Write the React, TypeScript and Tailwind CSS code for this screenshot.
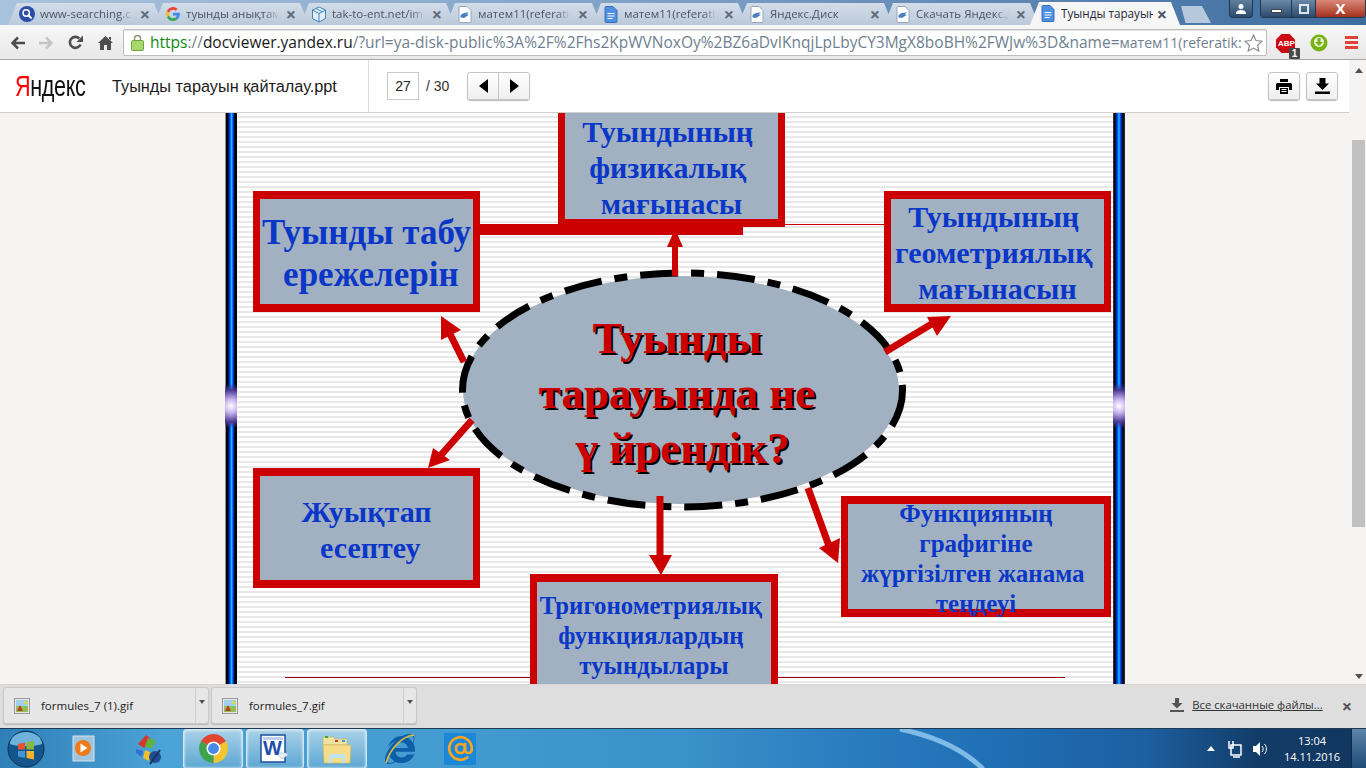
import { AtSign } from "lucide-react";
import { FaInternetExplorer } from "react-icons/fa";

const TABS = [
  { title: "www-searching.c", icon: "search" },
  { title: "туынды анықтам", icon: "google" },
  { title: "tak-to-ent.net/im", icon: "box" },
  { title: "матем11(referatik", icon: "disk" },
  { title: "матем11(referatik", icon: "doc" },
  { title: "Яндекс.Диск", icon: "disk" },
  { title: "Скачать Яндекс.Д", icon: "disk" },
];

const NODES = [
  {
    lines: ["Туынды табу", "\u00a0ережелерін"],
    box: "left-[28px] top-[78px] h-[121px] w-[227px] justify-center pt-[4px]",
    text: "text-[35px] leading-[42px]",
  },
  {
    lines: ["Туындының\u00a0", "физикалық\u00a0", "мағынасы"],
    box: "left-[333px] top-[-8px] h-[122px] w-[227px] pt-[1px]",
    text: "text-[30px] leading-[36px]",
  },
  {
    lines: ["Туындының\u00a0", "геометриялық\u00a0", "мағынасын"],
    box: "left-[659px] top-[78px] h-[121px] w-[227px] pt-0",
    text: "text-[30px] leading-[36px]",
  },
  {
    lines: ["Жуықтап", "\u00a0есептеу"],
    box: "left-[28px] top-[355px] h-[120px] w-[227px] justify-center pt-[3px]",
    text: "text-[30px] leading-[36px]",
  },
  {
    lines: ["Тригонометриялық\u00a0", "функциялардың\u00a0", "туындылары"],
    box: "left-[305px] top-[461px] h-[130px] w-[248px] pt-[9px]",
    text: "text-[24.8px] leading-[30px]",
  },
  {
    lines: ["Функцияның", "графигіне", "жүргізілген жанама\u00a0", "теңдеуі"],
    box: "left-[616px] top-[383px] h-[121px] w-[270px] pt-0",
    text: "first:-mt-[5px] text-[25px] leading-[30px]",
  },
];

function TabIcon({ kind }: { kind: string }) {
  if (kind === "search") {
    return (
      <svg width="16" height="16" viewBox="0 0 16 16" className="shrink-0">
        <circle cx="8" cy="8" r="8" fill="#2b4fa8" />
        <circle cx="7.2" cy="7" r="3.2" fill="none" stroke="#fff" strokeWidth="1.5" />
        <path d="M9.6 9.5l3 3" stroke="#fff" strokeWidth="1.8" />
      </svg>
    );
  }
  if (kind === "google") {
    return (
      <svg width="16" height="16" viewBox="0 0 16 16" className="shrink-0">
        <path d="M14.8 8.2c0-.5 0-1-.1-1.400H8v2.700h3.800a3.300 3.300 0 0 1-1.400 2.100l2.200 1.700c1.400-1.200 2.200-3 2.200-5.100z" fill="#4285f4" />
        <path d="M8 15c1.900 0 3.400-.6 4.600-1.700l-2.200-1.700c-.6.400-1.400.700-2.400.700-1.800 0-3.400-1.200-3.900-2.900L1.800 11.100A7 7 0 0 0 8 15z" fill="#34a853" />
        <path d="M4.100 9.400a4.200 4.200 0 0 1 0-2.800L1.800 4.900a7 7 0 0 0 0 6.200z" fill="#fbbc05" />
        <path d="M8 3.800c1 0 1.900.400 2.600 1l2-2A7 7 0 0 0 1.800 4.900l2.300 1.700C4.600 5 6.200 3.800 8 3.800z" fill="#ea4335" />
      </svg>
    );
  }
  if (kind === "box") {
    return (
      <svg width="16" height="17" viewBox="0 0 16 17" className="shrink-0" fill="#e3eef7" stroke="#3f86bd" strokeWidth="1">
        <path d="M8 1l6.500 3v8.500L8 16l-6.500-3.500V4z" />
        <path d="M1.500 4L8 7.500 14.500 4M8 7.500V16M4.800 2.500l6.500 3.200" fill="none" />
      </svg>
    );
  }
  if (kind === "doc") {
    return (
      <svg width="14" height="17" viewBox="0 0 14 17" className="shrink-0">
        <path d="M1 1.500A1 1 0 0 1 2 .5h7l4 4v11a1 1 0 0 1-1 1H2a1 1 0 0 1-1-1z" fill="#4d8fe0" stroke="#3a70b8" />
        <path d="M3.500 7.500h7M3.500 10h7M3.500 12.500h5" stroke="#fff" strokeWidth="1.200" />
      </svg>
    );
  }
  return (
    <svg width="14" height="17" viewBox="0 0 14 17" className="shrink-0">
      <path d="M1 1.500A1 1 0 0 1 2 .5h7l4 4v11a1 1 0 0 1-1 1H2a1 1 0 0 1-1-1z" fill="#fff" stroke="#9aa5b3" />
      <path d="M2.500 9.500c2-2.800 5-3.300 8.500-3l-2.500 1.800 2.500.4-5 3.300-3.500-.5z" fill="#4a7fc0" />
    </svg>
  );
}

function Tab({ title, icon }: { title: string; icon: string }) {
  return (
    <div className="-mr-[9px] flex h-[22px] w-[155px] shrink-0 items-center bg-gradient-to-b from-[#d3dde9] to-[#bac9da] pl-[11px] pr-[13px] [clip-path:polygon(0_100%,9px_0,146px_0,155px_100%)]">
      <div className="flex w-[16px] shrink-0 justify-center">
        <TabIcon kind={icon} />
      </div>
      <span className="ml-[5px] w-[93px] overflow-hidden whitespace-nowrap text-[11.500px] text-[#4b5563] [mask-image:linear-gradient(90deg,#000_85%,transparent)]">
        {title}
      </span>
      <span className="ml-auto text-[18px] font-bold leading-none text-[#5f6b78]">×</span>
    </div>
  );
}

function TabStrip() {
  return (
    <div className="relative flex h-[25px] shrink-0 items-end overflow-hidden bg-gradient-to-r from-[#a9c3df] via-[#7c9fc5] to-[#3c6c9e] pl-[8px] font-['Open_Sans',sans-serif]">
      {TABS.map((t, i) => (
        <Tab key={i} title={t.title} icon={t.icon} />
      ))}
      <div className="z-10 flex h-[23px] w-[150px] shrink-0 items-center bg-[#f6f6f6] pl-[10px] pr-[13px] [clip-path:polygon(0_100%,9px_0,141px_0,150px_100%)]">
        <div className="flex w-[16px] shrink-0 justify-center">
          <TabIcon kind="doc" />
        </div>
        <span className="ml-[5px] w-[92px] overflow-hidden whitespace-nowrap text-[11.700px] text-[#1f2937]">
          Туынды тарауын
        </span>
        <span className="ml-auto text-[18px] font-bold leading-none text-[#4b5563]">×</span>
      </div>
      <div className="mb-[2px] ml-[1px] h-[17px] w-[30px] bg-[#b5c8dc] [clip-path:polygon(0_0,70%_0,100%_100%,15%_100%)]" />
      <div className="ml-auto flex h-[18px] self-start">
        <div className="mr-[7px] flex w-[24px] items-center justify-center rounded-b-[4px] border border-t-0 border-[#24374d] bg-gradient-to-b from-[#5f7f9f] to-[#2d4c6d]">
          <svg width="12" height="12" viewBox="0 0 12 12" fill="#fff">
            <circle cx="6" cy="3.500" r="2.500" />
            <path d="M1 11c0-3 2-4 5-4s5 1 5 4z" />
          </svg>
        </div>
        <div className="flex w-[106px] rounded-b-[4px] border border-t-0 border-[#24374d]">
          <div className="flex w-[30px] items-center justify-center bg-gradient-to-b from-[#6a89a8] to-[#2d4c6d]">
            <div className="mt-[5px] h-[4px] w-[11px] border border-[#444] bg-white" />
          </div>
          <div className="flex w-[25px] items-center justify-center border-x border-[#24374d] bg-gradient-to-b from-[#6a89a8] to-[#2d4c6d]">
            <div className="h-[10px] w-[10px] border-2 border-[#dfe6ee]" />
          </div>
          <div className="flex flex-1 items-center justify-center rounded-br-[4px] bg-gradient-to-b from-[#d88878] to-[#a52c1c] text-[15px] font-bold leading-none text-white">
            X
          </div>
        </div>
      </div>
    </div>
  );
}

function Toolbar() {
  return (
    <div className="flex h-[35px] shrink-0 items-center border-b border-[#a6a6a6] bg-gradient-to-b from-[#f7f7f7] to-[#e8e8e8] pl-[10px] pt-[1px] font-['Open_Sans',sans-serif]">
      <svg width="15" height="14" viewBox="0 0 15 14" fill="none" stroke="#4d4d4d" strokeWidth="2.500">
        <path d="M15 7H3M8 1.500L2.500 7 8 12.500" />
      </svg>
      <svg width="15" height="14" viewBox="0 0 15 14" fill="none" stroke="#c4c4c4" strokeWidth="2.500" className="ml-[14px]">
        <path d="M0 7h12M7 1.500L12.500 7 7 12.500" />
      </svg>
      <svg width="15" height="15" viewBox="0 0 15 15" fill="none" className="ml-[14px]">
        <path d="M12.500 9.500A5.500 5.500 0 1 1 11.300 3.500" stroke="#4d4d4d" strokeWidth="2.600" />
        <path d="M15 .5V7H8.500z" fill="#4d4d4d" />
      </svg>
      <svg width="15" height="14" viewBox="0 0 15 14" fill="#4d4d4d" className="ml-[15px]">
        <path d="M7.500 0L15 7h-2v7H9V9H6v5H2V7H0z" />
        <path d="M11 1h2v3.500l-2-1.800z" />
      </svg>
      <div className="ml-[10px] flex h-[27px] w-[1144px] items-center rounded-[2px] border border-[#bdbdbd] bg-white pl-[7px] pr-[3px] shadow-[inset_0_1px_1px_#e5e5e5]">
        <svg width="13" height="17" viewBox="0 0 13 17" className="shrink-0">
          <path d="M3.500 7V4.500a3 3 0 0 1 6 0V7" fill="none" stroke="#8a9a7a" strokeWidth="1.500" />
          <rect x="0.500" y="6.500" width="12" height="10" rx="1" fill="#a6d86e" stroke="#6fa53c" />
        </svg>
        <div className="ml-[6px] flex-1 overflow-hidden whitespace-nowrap text-[15.500px] leading-[20px] text-[#6f7f90]">
          <span className="text-[#128a12]">https</span>
          <span>://</span>
          <span className="text-[#1a1a1a]">docviewer.yandex.ru</span>
          /?url=ya-disk-public%3A%2F%2Fhs2KpWVNoxOy%2BZ6aDvIKnqjLpLbyCY3MgX8boBH%2FWJw%3D&amp;name=
          <span className="text-[14px]">матем11(referatik:</span>
        </div>
        <svg width="19" height="18" viewBox="0 0 19 18" fill="#fff" stroke="#8c8c8c" strokeWidth="1.200" className="ml-[2px] shrink-0">
          <path d="M9.500 1l2.500 5.500 6 .7-4.400 4 1.200 5.900-5.300-3-5.300 3 1.200-5.900-4.400-4 6-.7z" />
        </svg>
      </div>
      <div className="relative ml-[9px] h-[24px] w-[24px]">
        <svg width="19" height="19" viewBox="0 0 19 19" className="absolute left-0 top-[3px]">
          <path d="M5.500 0h8L19 5.500v8L13.500 19h-8L0 13.500v-8z" fill="#cc0a14" />
        </svg>
        <span className="absolute left-[2px] top-[8px] font-['Liberation_Sans',sans-serif] text-[8px] font-bold leading-[9px] text-white">ABP</span>
        <span className="absolute left-[13px] top-[17px] h-[11px] w-[11px] rounded-[1px] bg-[#484848] text-center font-['Liberation_Sans',sans-serif] text-[10px] font-bold leading-[11px] text-white">1</span>
      </div>
      <svg width="18" height="18" viewBox="0 0 18 18" className="ml-[10px]">
        <circle cx="9" cy="9" r="8.500" fill="#78b214" />
        <circle cx="9" cy="8" r="5" fill="#eaf5d8" />
        <path d="M7.500 4h3v4H13l-4 4-4-4h2.500z" fill="#78b214" />
      </svg>
      <div className="ml-[17px] flex h-[13px] w-[13px] flex-col justify-between">
        <div className="h-[3px] bg-[#e04438]" />
        <div className="h-[3px] bg-[#e04438]" />
        <div className="h-[3px] bg-[#e04438]" />
      </div>
    </div>
  );
}

function DocHeader() {
  return (
    <div className="flex h-[53px] shrink-0 items-center border-b border-[#cfcfcf] bg-white font-['Liberation_Sans',sans-serif]">
      <div className="flex h-full w-[369px] shrink-0 items-center border-r border-[#dedede] pl-[15px]">
        <div className="w-[71px] origin-left scale-x-[0.72] whitespace-nowrap text-[30px] leading-none tracking-[-0.5px] text-[#111]">
          <span className="text-[#f00]">Я</span>ндекс
        </div>
        <span className="ml-[26px] whitespace-nowrap text-[16.300px] text-[#1a1a1a]">Туынды тарауын қайталау.ppt</span>
      </div>
      <div className="ml-[18px] flex h-[28px] w-[32px] items-center justify-center border border-[#c9c9c9] text-[14px] text-[#222]">27</div>
      <span className="ml-[7px] text-[14px] text-[#333]">/ 30</span>
      <div className="ml-[18px] flex h-[28px] w-[63px] rounded-[3px] border border-[#c4c4c4] bg-gradient-to-b from-white to-[#efefef] shadow-[0_1px_1px_#bbb]">
        <div className="flex flex-1 items-center justify-center border-r border-[#c4c4c4]">
          <div className="h-0 w-0 border-y-[7px] border-r-[9px] border-y-transparent border-r-black" />
        </div>
        <div className="flex flex-1 items-center justify-center">
          <div className="h-0 w-0 border-y-[7px] border-l-[9px] border-y-transparent border-l-black" />
        </div>
      </div>
      <div className="ml-auto flex h-[28px] w-[32px] items-center justify-center rounded-[3px] border border-[#c4c4c4] bg-gradient-to-b from-white to-[#efefef] shadow-[0_1px_1px_#bbb]">
        <svg width="16" height="15" viewBox="0 0 16 15">
          <path d="M4 0h8v3H4zM1.500 4h13A1.500 1.500 0 0 1 16 5.500V11h-3V8H3v3H0V5.500A1.500 1.500 0 0 1 1.500 4z" fill="#000" />
          <path d="M4 9h8v6H4z" fill="#000" />
          <path d="M5.500 10.500h5M5.500 12.500h5" stroke="#fff" />
        </svg>
      </div>
      <div className="ml-[6px] mr-[11px] flex h-[28px] w-[32px] items-center justify-center rounded-[3px] border border-[#c4c4c4] bg-gradient-to-b from-white to-[#efefef] shadow-[0_1px_1px_#bbb]">
        <svg width="15" height="16" viewBox="0 0 15 16" fill="#000">
          <path d="M4.500 0h6v5.500H14l-6.500 6.500L1 5.500h3.500zM0 13.500h15V16H0z" />
        </svg>
      </div>
    </div>
  );
}

function Arrow({ body, head, stem = 7 }: { body: string; head: string; stem?: number }) {
  return (
    <g>
      <path d={body} stroke="#cc0000" strokeWidth={stem} fill="none" />
      <polygon points={head} fill="#cc0000" />
    </g>
  );
}

function Slide() {
  return (
    <div className="relative ml-[225px] h-full w-[900px] overflow-hidden bg-[repeating-linear-gradient(180deg,#fff_0,#fff_3px,#e8e8e8_3px,#e8e8e8_5px)] font-['Liberation_Serif',serif] font-bold">
      <div className="absolute left-0 top-0 h-full w-[12px] bg-[linear-gradient(90deg,#d9d9d9_0,#000_12%,#000_22%,#0038f0_40%,#12c8ff_55%,#0038f0_68%,#000_82%)]" />
      <div className="absolute right-0 top-0 h-full w-[12px] bg-[linear-gradient(90deg,#555_0,#000_12%,#0038f0_35%,#12c8ff_50%,#0038f0_65%,#000_82%,#333_100%)]" />
      <div className="absolute left-0 top-[271px] h-[44px] w-[12px] bg-[radial-gradient(circle,#fff_0,#c9b4ef_30%,#4a3a90_70%,transparent_100%)]" />
      <div className="absolute right-0 top-[271px] h-[44px] w-[12px] bg-[radial-gradient(circle,#fff_0,#c9b4ef_30%,#4a3a90_70%,transparent_100%)]" />

      <svg className="absolute left-0 top-0" width="900" height="571" viewBox="225 113 900 571">
        <path d="M785 224.500H885" stroke="#cc0000" strokeWidth="1" />
        <path d="M285 677.500H530M778 677.500H1065" stroke="#a00000" strokeWidth="1" />
        <ellipse cx="681" cy="390" rx="218" ry="114" fill="#a2b1c1" />
        <ellipse cx="682.500" cy="390" rx="220" ry="117" fill="none" stroke="#000" strokeWidth="7" strokeDasharray="38 13 13 13" />
        <Arrow body="M675 276V243" head="675,229 683,247 667,247" stem={6} />
        <Arrow body="M464 362L449 332" head="441,316 461,330 441,340" />
        <Arrow body="M885 352L935 322" head="951,316 937,336 927,317" />
        <Arrow body="M472 420L441 455" head="428,468 433,448 450,460" />
        <Arrow body="M660 496V560" head="661,575 649,555 672,555" />
        <Arrow body="M808 488L829 546" head="838,563 819,548 840,538" />
        <rect x="480" y="224" width="263" height="11" fill="#cc0000" />
      </svg>

      {NODES.map((n) => (
        <div
          key={n.lines[0]}
          className={`absolute flex flex-col items-center border-x-[7px] border-y-[8px] border-[#cc0000] bg-[#a2b1c1] text-center text-[#0a37c8] ${n.box}`}
        >
          {n.lines.map((l) => (
            <div key={l} className={`shrink-0 whitespace-nowrap ${n.text}`}>
              {l}
            </div>
          ))}
        </div>
      ))}

      <div className="absolute left-[252px] top-[198px] w-[400px] text-center text-[45px] leading-[55px] text-[#cc0000] [text-shadow:2px_2px_0_#000]">
        <div>Туынды</div>
        <div>тарауында не</div>
        <div>{"\u00a0ү йрендік?"}</div>
      </div>
    </div>
  );
}

function ScrollColumn() {
  return (
    <div className="flex w-[17px] shrink-0 flex-col items-center bg-[#f5f4f2] pl-[2px]">
      <div className="mt-[8px] h-0 w-0 border-x-[4px] border-b-[5px] border-x-transparent border-b-[#505050]" />
      <div className="mt-[67px] h-[387px] w-[13px] bg-[#c1c1c1]" />
      <div className="mt-auto mb-[5px] h-0 w-0 border-x-[4px] border-t-[5px] border-x-transparent border-t-[#505050]" />
    </div>
  );
}

function ImgIcon() {
  return (
    <svg width="16" height="16" viewBox="0 0 16 16" className="shrink-0">
      <rect x="0.500" y="0.500" width="15" height="15" fill="#e6e6e6" stroke="#9a9a9a" />
      <rect x="2" y="2" width="12" height="6" fill="#9ed0ef" />
      <rect x="2" y="8" width="12" height="6" fill="#8fbf50" />
      <path d="M3 13l3-6 3 6z" fill="#c2392b" />
      <rect x="10" y="3" width="3" height="3" fill="#e8d24a" />
    </svg>
  );
}

function DownloadItem({ name, width }: { name: string; width: string }) {
  return (
    <div className={`flex h-[37px] items-center rounded-[3px] border border-[#c8c8c8] bg-[#e6e6e6] shadow-[0_1px_1px_#bbb] ${width}`}>
      <div className="ml-[10px]">
        <ImgIcon />
      </div>
      <span className="ml-[11px] text-[11.500px] text-[#222]">{name}</span>
      <div className="ml-auto flex h-full w-[13px] justify-center border-l border-[#d0d0d0] pt-[12px]">
        <div className="h-0 w-0 border-x-[3px] border-t-[4px] border-x-transparent border-t-[#555]" />
      </div>
    </div>
  );
}

function DownloadBar() {
  return (
    <div className="flex h-[44px] shrink-0 items-start gap-[2px] border-t border-[#d5d5d5] bg-[#dedede] pl-[3px] pt-[2px] font-['Open_Sans',sans-serif]">
      <DownloadItem name="formules_7 (1).gif" width="w-[206px]" />
      <DownloadItem name="formules_7.gif" width="w-[206px]" />
      <svg width="14" height="14" viewBox="0 0 14 14" fill="#555" className="ml-auto mt-[11px]">
        <path d="M5 0h4v5h3.500L7 10.500 1.500 5H5zM0 12h14v2H0z" />
      </svg>
      <span className="ml-[6px] mt-[10px] text-[11.300px] text-[#333] underline">Все скачанные файлы...</span>
      <span className="ml-[17px] mr-[14px] mt-[10px] text-[18px] font-bold leading-none text-[#555]">×</span>
    </div>
  );
}

function TaskButton({ children, width }: { children: React.ReactNode; width: string }) {
  return (
    <div className={`flex h-[40px] items-center justify-center rounded-[3px] border border-[#d2e6f2] bg-gradient-to-b from-[#a8d2e8] to-[#5ba6d2] shadow-[inset_0_0_3px_#fff] ${width}`}>
      {children}
    </div>
  );
}

function Taskbar() {
  return (
    <div className="relative flex h-[40px] shrink-0 items-center overflow-hidden border-t border-[#1f3a55] bg-[linear-gradient(90deg,#2f7fb8_0,#4ba3d6_12%,#449cd0_30%,#3b91c9_50%,#2a7dbf_62%,#2070b6_72%,#1d5fa0_84%,#123c68_92%,#12365e_100%)] font-['Open_Sans',sans-serif]">
      <svg className="absolute left-[880px] top-0" width="110" height="40" viewBox="0 0 110 40" fill="none">
        <path d="M20 0C58 8 85 22 103 40" stroke="#7fbbe6" strokeWidth="5" />
      </svg>
      <svg width="38" height="38" viewBox="0 0 38 38" className="relative ml-[7px] shrink-0">
        <circle cx="19" cy="19" r="18" fill="#14568c" stroke="#0b3250" />
        <path d="M3 14a16 12 0 0 1 32 0c-8 3-24 3-32 0z" fill="#6fb2dc" />
        <path d="M11 14l7-1.500v7h-7z" fill="#e8502e" />
        <path d="M19.500 12.200l7.500-1.500v8.800h-7.500z" fill="#86b83c" />
        <path d="M11 21h7v7l-7-1.500z" fill="#3f96d8" />
        <path d="M19.500 21H27v8.500l-7.500-1.500z" fill="#f2b42c" />
      </svg>
      <svg width="26" height="28" viewBox="0 0 26 28" className="relative ml-[27px] shrink-0">
        <rect x="1" y="1" width="21" height="25" fill="#9fc5de" stroke="#d2e3ee" />
        <circle cx="11" cy="13" r="8" fill="#ee7a1c" />
        <path d="M8.500 8.500l7 4.500-7 4.500z" fill="#fff" />
      </svg>
      <svg width="30" height="32" viewBox="0 0 30 32" className="relative ml-[37px] shrink-0">
        <path d="M3 11l8-9 5 4-7 9z" fill="#d8352c" />
        <path d="M13 5l8 3-5 8-6-3z" fill="#5fb33a" />
        <path d="M1 16l7 2-1 6-6-4z" fill="#2f72d0" />
        <path d="M10 17l7 3-3 8-6-3z" fill="#efc12a" />
        <circle cx="20" cy="24" r="6" fill="#1e4d96" />
        <path d="M15 31l10-14" stroke="#19345f" strokeWidth="2" />
      </svg>
      <div className="relative ml-[18px] flex gap-[3px]">
        <TaskButton width="w-[60px]">
          <svg width="29" height="29" viewBox="0 0 28 28">
            <path d="M14 14L26.100 7A14 14 0 0 0 1.900 7z" fill="#e0452f" />
            <path d="M14 14V28A14 14 0 0 0 26.100 7z" fill="#f4c430" />
            <path d="M14 14L1.900 7A14 14 0 0 0 14 28z" fill="#3fa34d" />
            <circle cx="14" cy="14" r="6.800" fill="#fff" />
            <circle cx="14" cy="14" r="5.200" fill="#4a87e8" />
          </svg>
        </TaskButton>
        <TaskButton width="w-[58px]">
          <svg width="30" height="30" viewBox="0 0 30 30">
            <rect x="1" y="1" width="24" height="27" fill="#fff" stroke="#1f4e9c" strokeWidth="1.500" />
            <rect x="3" y="3" width="20" height="3" fill="#bcd2ee" />
            <path d="M16 19l6 6 6-4-2-2z" fill="#e6ecf5" stroke="#9fb0c9" strokeWidth="0.500" />
            <text x="3" y="21" fontSize="20" fontWeight="700" fontFamily="'Liberation Sans', sans-serif" fill="#1b4fa8">W</text>
          </svg>
        </TaskButton>
        <TaskButton width="w-[60px]">
          <svg width="32" height="32" viewBox="0 0 32 32">
            <path d="M2 4h10l2 2h12v6H2z" fill="#f0e3a0" stroke="#c7b468" strokeWidth="0.700" />
            <rect x="4" y="3" width="3" height="2" fill="#3aa845" />
            <rect x="14" y="7" width="3" height="2" fill="#d8352c" />
            <rect x="21" y="7" width="3" height="2" fill="#3f96d8" />
            <path d="M2 12h28l-1 18H3z" fill="#f6dd88" stroke="#cdb25c" strokeWidth="0.700" />
            <path d="M8 30v-7a2 2 0 0 1 2-2h12a2 2 0 0 1 2 2v7h-3v-5H11v5z" fill="#bde3f2" />
          </svg>
        </TaskButton>
      </div>
      <div className="relative ml-[17px] flex h-[34px] w-[32px] shrink-0 items-center justify-center">
        <FaInternetExplorer size={30} color="#0f5fa8" />
        <svg className="absolute left-0 top-0" width="32" height="34" viewBox="0 0 32 34" fill="none">
          <path d="M2 31C6 17 18 4 30 3" stroke="#e2b93a" strokeWidth="1.500" />
        </svg>
      </div>
      <div className="relative ml-[28px] flex h-[32px] w-[32px] shrink-0 items-center justify-center bg-[#1b87d8]">
        <AtSign size={27} color="#f5a623" strokeWidth={2.4} />
      </div>
      <div className="relative ml-auto flex items-center">
        <div className="h-0 w-0 border-x-[4px] border-b-[5px] border-x-transparent border-b-white" />
        <svg width="15" height="18" viewBox="0 0 15 18" fill="none" stroke="#fff" strokeWidth="1.500" className="ml-[12px]">
          <rect x="4" y="5" width="10" height="10" />
          <path d="M2 1v7h4V1M6 17h7" />
        </svg>
        <svg width="15" height="16" viewBox="0 0 15 16" fill="#fff" className="ml-[11px]">
          <path d="M0 5h3l4-4v14l-4-4H0z" />
          <path d="M9 5c1.500 1.500 1.500 4.500 0 6M11.500 3c2.500 2.500 2.500 7.500 0 10" fill="none" stroke="#fff" />
        </svg>
        <div className="ml-[14px] flex w-[60px] flex-col items-center text-[11px] leading-[16px] text-white">
          <span>13:04</span>
          <span>14.11.2016</span>
        </div>
        <div className="ml-[9px] h-[40px] w-[15px] border-l border-[#0d2b48] bg-gradient-to-b from-[#5d84a8] to-[#1c4a76]" />
      </div>
    </div>
  );
}

export default function App() {
  return (
    <div className="flex h-[768px] w-[1366px] flex-col overflow-hidden bg-[#f5f4f2]">
      <TabStrip />
      <Toolbar />
      <div className="flex min-h-0 flex-1">
        <div className="flex min-w-0 flex-1 flex-col">
          <DocHeader />
          <div className="min-h-0 flex-1 overflow-hidden">
            <Slide />
          </div>
        </div>
        <ScrollColumn />
      </div>
      <DownloadBar />
      <Taskbar />
    </div>
  );
}
